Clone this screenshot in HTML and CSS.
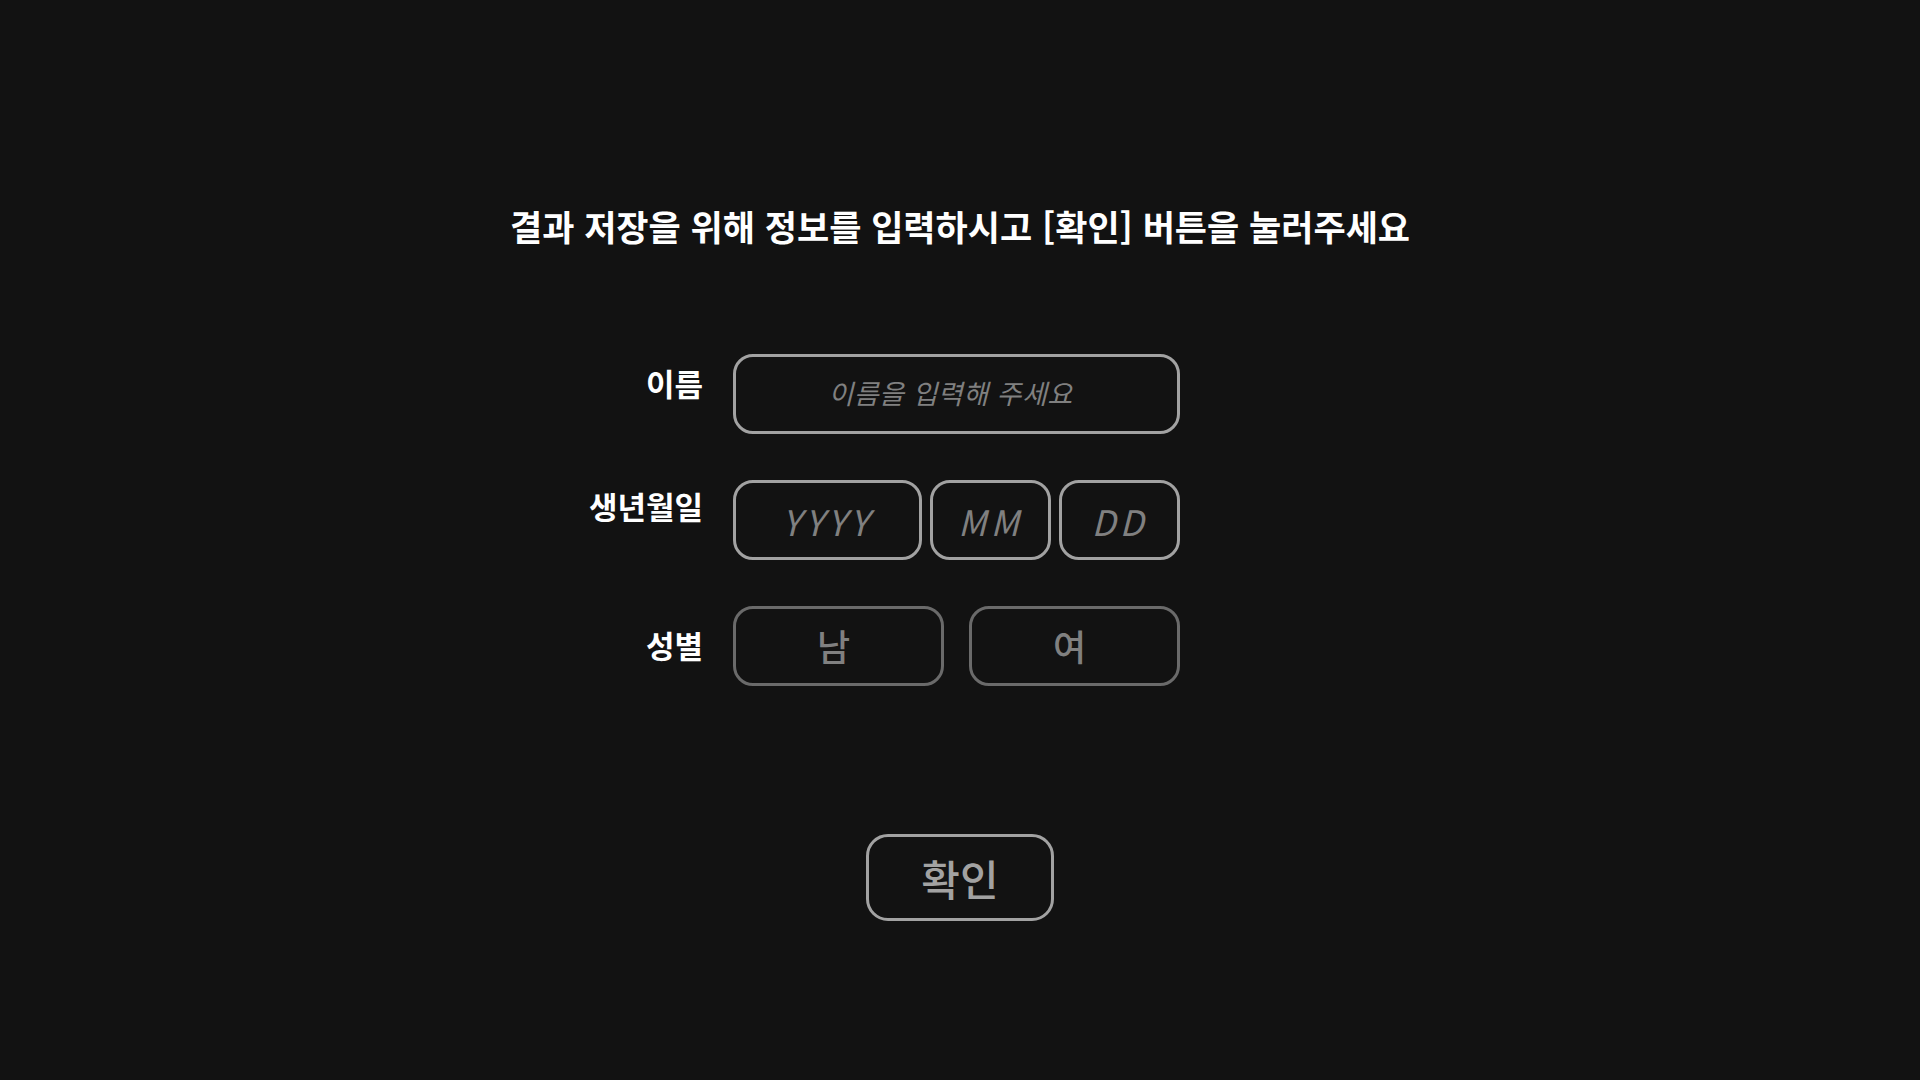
FILE: index.html
```html
<!DOCTYPE html>
<html lang="ko">
<head>
    <meta charset="UTF-8">
    <meta name="viewport" content="width=device-width, initial-scale=1.0">
    <title>정보 입력</title>
    <link rel="stylesheet" href="styles.css">
</head>
<body>
    <h1 class="title">결과 저장을 위해 정보를 입력하시고 [확인] 버튼을 눌러주세요</h1>

    <form class="info-form" id="infoForm">
        <div class="row">
            <label class="row-label label-name" for="userName">이름</label>
            <input class="field field-name" type="text" id="userName" placeholder="이름을 입력해 주세요">
        </div>
        <div class="row">
            <label class="row-label label-birth" for="birthYear">생년월일</label>
            <div class="birth-group">
                <input class="field field-date field-year" type="text" id="birthYear" placeholder="YYYY" maxlength="4">
                <input class="field field-date field-month" type="text" id="birthMonth" placeholder="MM" maxlength="2">
                <input class="field field-date field-day" type="text" id="birthDay" placeholder="DD" maxlength="2">
            </div>
        </div>
        <div class="row">
            <span class="row-label label-gender">성별</span>
            <div class="gender-group">
                <button type="button" class="gender-btn" data-gender="M">남</button>
                <button type="button" class="gender-btn" data-gender="F">여</button>
            </div>
        </div>

        <div class="actions">
            <button type="submit" class="confirm-btn">확인</button>
        </div>
    </form>
</body>
</html>
```

FILE: styles.css
```css
body {
    margin: 0;
    background-color: #121212;
    color: #fff;
    font-family: "Noto Sans CJK KR", "Noto Sans", sans-serif;
}

.title {
    margin: 205px 0 0;
    font-size: 35px;
    font-weight: 700;
    line-height: 1.2;
    text-align: center;
}

.info-form {
    width: 900px;
    margin: 107px auto 0;
}

.row {
    display: grid;
    grid-template-columns: 193px 447px;
    column-gap: 30px;
    align-items: center;
    height: 80px;
    margin-bottom: 46px;
}

.row-label {
    font-size: 31px;
    font-weight: 700;
    line-height: 1.2;
    text-align: right;
}

.label-name {
    padding-bottom: 22px;
}

.label-birth {
    padding-bottom: 28px;
}

.label-gender {
    padding-bottom: 2px;
}

.field {
    box-sizing: border-box;
    height: 80px;
    border: 3px solid #a2a2a2;
    border-radius: 20px;
    background: transparent;
    color: #fff;
    font-family: inherit;
    text-align: center;
    outline: none;
}

.field::placeholder {
    color: #808080;
    font-style: italic;
}

.field-name {
    width: 447px;
    padding: 0 12px 4px 0;
    font-size: 27px;
    letter-spacing: 0.5px;
}

.birth-group {
    display: flex;
    gap: 8px;
}

.field-date {
    font-size: 35px;
    letter-spacing: 4px;
}

.field-year {
    width: 189px;
}

.field-month,
.field-day {
    width: 121px;
}

.gender-group {
    display: flex;
    gap: 25px;
}

.gender-btn {
    width: 211px;
    height: 80px;
    padding: 0 10px 2px 0;
    border: 3px solid #6a6a6a;
    border-radius: 20px;
    background: transparent;
    color: #808080;
    font-family: inherit;
    font-size: 36px;
    font-weight: 500;
    cursor: pointer;
}

.actions {
    display: flex;
    justify-content: center;
    margin-top: 148px;
}

.confirm-btn {
    width: 188px;
    height: 87px;
    border: 3px solid #a2a2a2;
    border-radius: 22px;
    background: transparent;
    color: #a2a2a2;
    font-family: inherit;
    font-size: 42px;
    font-weight: 500;
    cursor: pointer;
}
```
